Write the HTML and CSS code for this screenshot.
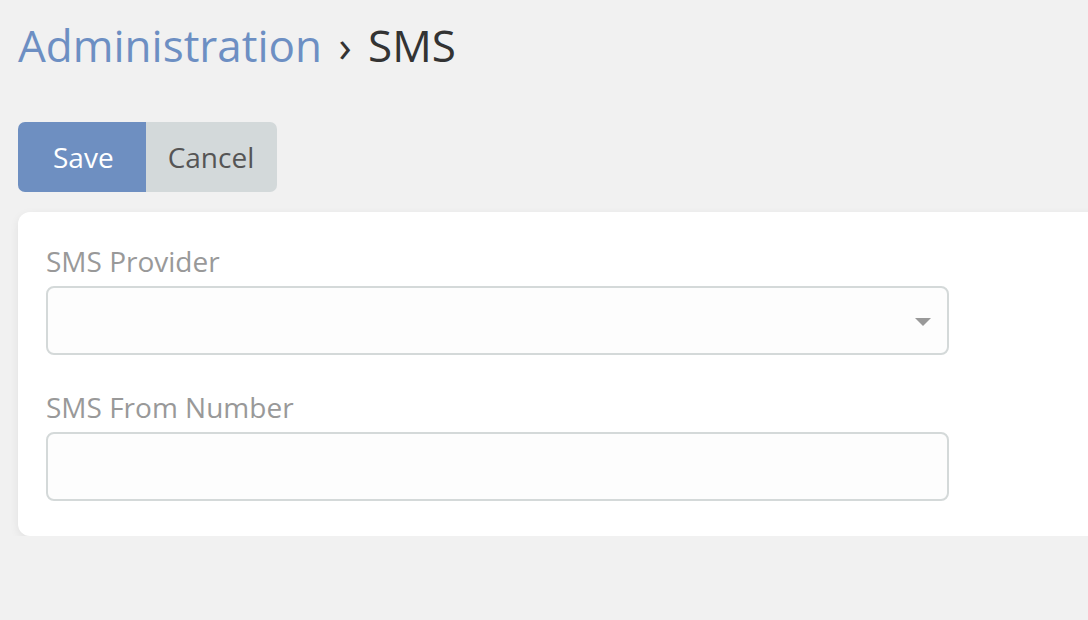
FILE: index.html
```html
<!DOCTYPE html>
<html lang="en">
<head>
<meta charset="utf-8">
<title>Administration › SMS</title>
<link rel="stylesheet" href="styles.css">
</head>
<body>
<div class="page">
  <h1 class="title"><a class="crumb" href="#">Administration</a> <span class="sep">›</span> <span class="current">SMS</span></h1>
  <div class="actions">
    <button class="btn btn-save" type="button">Save</button><button class="btn btn-cancel" type="button">Cancel</button>
  </div>
  <div class="card">
    <div class="field">
      <label class="label">SMS Provider</label>
      <div class="select-wrap">
        <div class="input select"></div>
        <span class="caret"></span>
      </div>
    </div>
    <div class="field">
      <label class="label">SMS From Number</label>
      <input class="input" type="text">
    </div>
  </div>
</div>
</body>
</html>
```
FILE: styles.css
```css
html {
  overflow: hidden;
}
body {
  margin: 0;
  background: #f1f1f1;
  font-family: "Open Sans", "Liberation Sans", sans-serif;
}
.page {
  padding: 15px 0 0 18px;
}
.title {
  margin: 0;
  font-size: 44px;
  line-height: 60px;
  font-weight: 400;
  color: #333333;
  white-space: nowrap;
}
.crumb {
  color: #6d8fc3;
  text-decoration: none;
}
.sep {
  color: #333333;
  margin: 0 5px;
}
.actions {
  display: flex;
  margin-top: 47px;
}
.btn {
  height: 70px;
  border: none;
  font-family: "Open Sans", "Liberation Sans", sans-serif;
  font-size: 28px;
  line-height: 70px;
  margin: 0;
  cursor: pointer;
}
.btn-save {
  background: #6e8fc1;
  color: #ffffff;
  padding: 0 32px 0 35px;
  border-radius: 7px 0 0 7px;
}
.btn-cancel {
  background: #d3d9da;
  color: #555555;
  padding: 0 23px 0 22px;
  border-radius: 0 7px 7px 0;
}
.card {
  margin-top: 20px;
  width: 1120px;
  background: #ffffff;
  border-radius: 12px;
  box-shadow: 0 3px 10px rgba(0, 0, 0, 0.07);
  padding: 30px 28px 35px;
  box-sizing: border-box;
  display: flex;
  flex-direction: column;
  gap: 33px;
}
.field {
  display: flex;
  flex-direction: column;
}
.label {
  font-size: 28px;
  line-height: 38px;
  color: #999999;
  margin-bottom: 6px;
}
.input {
  display: block;
  width: 903px;
  height: 69px;
  box-sizing: border-box;
  border: 2px solid #d4d9d9;
  border-radius: 8px;
  background: #fdfdfd;
  margin: 0;
  padding: 0 16px;
  font-family: "Open Sans", "Liberation Sans", sans-serif;
  font-size: 28px;
  outline: none;
}
.select-wrap {
  position: relative;
  width: 903px;
}
.caret {
  position: absolute;
  right: 18px;
  top: 32px;
  width: 0;
  height: 0;
  border-left: 8px solid transparent;
  border-right: 8px solid transparent;
  border-top: 8px solid #999999;
}
```
